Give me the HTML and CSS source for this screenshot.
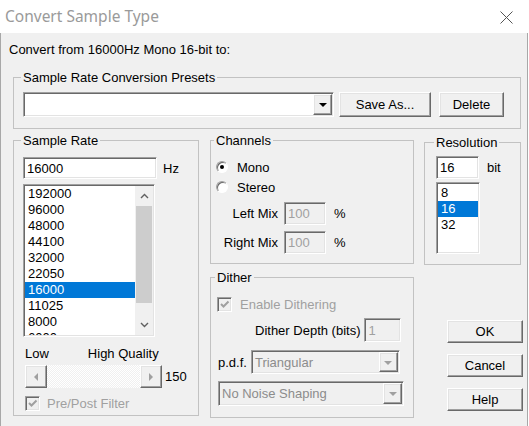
FILE: index.html
```html
<!DOCTYPE html>
<html>
<head>
<meta charset="utf-8">
<link rel="stylesheet" href="styles.css">
</head>
<body>
<div class="window">
  <div class="titlebar">
    <span class="title">Convert Sample Type</span>
    <svg class="close" width="13" height="13" viewBox="0 0 13 13"><path d="M0.5 0.5 L12.5 12.5 M12.5 0.5 L0.5 12.5" stroke="#555" stroke-width="1" fill="none"/></svg>
  </div>
  <div class="content">
    <p class="intro">Convert from 16000Hz Mono 16-bit to:</p>
    <fieldset class="group presets">
      <legend>Sample Rate Conversion Presets</legend>
      <div class="preset-row">
        <div class="combo sunken preset-combo">
          <span class="combo-text"></span>
          <span class="combo-btn raised"><span class="tri"></span></span>
        </div>
        <div class="btn raised save-btn">Save As...</div>
        <div class="btn raised delete-btn">Delete</div>
      </div>
    </fieldset>

    <div class="main">
      <fieldset class="group rate">
        <legend>Sample Rate</legend>
        <div class="field-row">
          <div class="edit sunken rate-edit">16000</div>
          <span class="unit">Hz</span>
        </div>
        <div class="listbox sunken rate-list">
          <div class="items">
            <div class="item">192000</div>
            <div class="item">96000</div>
            <div class="item">48000</div>
            <div class="item">44100</div>
            <div class="item">32000</div>
            <div class="item">22050</div>
            <div class="item selected">16000</div>
            <div class="item">11025</div>
            <div class="item">8000</div>
            <div class="item">6000</div>
          </div>
          <div class="vscroll">
            <div class="vs-btn"><svg width="9" height="6" viewBox="0 0 9 6"><path d="M1 5 L4.5 1.5 L8 5" stroke="#606060" stroke-width="1.4" fill="none"/></svg></div>
            <div class="vs-thumb"></div>
            <div class="vs-track"></div>
            <div class="vs-btn"><svg width="9" height="6" viewBox="0 0 9 6"><path d="M1 1 L4.5 4.5 L8 1" stroke="#606060" stroke-width="1.4" fill="none"/></svg></div>
          </div>
        </div>
        <div class="quality-labels">
          <span>Low</span>
          <span class="hq">High Quality</span>
        </div>
        <div class="slider-row">
          <div class="hslider">
            <div class="hs-btn raised"><span class="tri-left"></span></div>
            <div class="hs-track"></div>
            <div class="hs-btn raised"><span class="tri-right"></span></div>
          </div>
          <span class="slider-val">150</span>
        </div>
        <div class="check-row filter-row">
          <span class="checkbox sunken"><svg width="11" height="11" viewBox="0 0 11 11"><path d="M2 5 L4.5 7.5 L9.5 2.5" stroke="#a0a0a0" stroke-width="2" fill="none"/></svg></span>
          <span class="disabled-text">Pre/Post Filter</span>
        </div>
      </fieldset>

      <div class="col2">
        <fieldset class="group channels">
          <legend>Channels</legend>
          <div class="radio-row">
            <span class="radio"><span class="dot"></span></span>
            <span>Mono</span>
          </div>
          <div class="radio-row">
            <span class="radio"></span>
            <span>Stereo</span>
          </div>
          <div class="mix-grid">
            <span class="mix-label">Left Mix</span>
            <div class="edit sunken mix-edit disabled">100</div>
            <span class="pct">%</span>
            <span class="mix-label">Right Mix</span>
            <div class="edit sunken mix-edit disabled">100</div>
            <span class="pct">%</span>
          </div>
        </fieldset>

        <fieldset class="group dither">
          <legend>Dither</legend>
          <div class="check-row dither-check">
            <span class="checkbox sunken"><svg width="11" height="11" viewBox="0 0 11 11"><path d="M2 5 L4.5 7.5 L9.5 2.5" stroke="#a0a0a0" stroke-width="2" fill="none"/></svg></span>
            <span class="disabled-text">Enable Dithering</span>
          </div>
          <div class="depth-row">
            <span>Dither Depth (bits)</span>
            <div class="edit sunken depth-edit disabled">1</div>
          </div>
          <div class="pdf-row">
            <span>p.d.f.</span>
            <div class="combo sunken pdf-combo disabled">
              <span class="combo-text">Triangular</span>
              <span class="combo-btn raised"><span class="tri gray"></span></span>
            </div>
          </div>
          <div class="combo sunken noise-combo disabled">
            <span class="combo-text">No Noise Shaping</span>
            <span class="combo-btn raised"><span class="tri gray"></span></span>
          </div>
        </fieldset>
      </div>

      <div class="col3">
        <fieldset class="group resolution">
          <legend>Resolution</legend>
          <div class="field-row">
            <div class="edit sunken res-edit">16</div>
            <span class="unit bit">bit</span>
          </div>
          <div class="listbox sunken res-list">
            <div class="items">
              <div class="item">8</div>
              <div class="item selected">16</div>
              <div class="item">32</div>
            </div>
          </div>
        </fieldset>
        <div class="buttons">
          <div class="btn raised dlg-btn">OK</div>
          <div class="btn raised dlg-btn">Cancel</div>
          <div class="btn raised dlg-btn">Help</div>
        </div>
      </div>
    </div>
  </div>
</div>
</body>
</html>
```

FILE: styles.css
```css
* { box-sizing: border-box; }
html, body { margin: 0; padding: 0; }
body {
  width: 529px;
  height: 426px;
  overflow: hidden;
  background: #fff;
  font-family: "Liberation Sans", Arial, sans-serif;
  font-size: 13px;
  line-height: 15px;
  color: #000;
}
.window {
  width: 529px;
  height: 426px;
  display: flex;
  flex-direction: column;
}
.titlebar {
  height: 33px;
  flex: none;
  background: #fff;
  display: flex;
  align-items: center;
  justify-content: space-between;
  padding: 0 16px 0 5px;
}
.title {
  font-family: "Noto Sans", "Open Sans", sans-serif;
  font-size: 15.5px;
  color: #9a9a9a;
  margin-top: -1px;
}
.close { display: block; margin-top: 1px; }
.content {
  flex: 1;
  width: 528px;
  background: #f0f0f0;
  border-left: 1px solid #a8a8a8;
  border-right: 1px solid #a8a8a8;
  padding: 0 0 0 12px;
}
.intro {
  margin: 9px 0 13px -4px;
  height: 15px;
}

/* group boxes */
.group {
  margin: 0;
  min-width: 0;
  border: 1px solid #c2c2c2;
  padding: 0;
}
.group legend {
  padding: 0 2px;
  margin-left: -2px;
  line-height: 15px;
}

/* 3D borders */
.sunken {
  border: 1px solid;
  border-color: #a0a0a0 #fff #fff #a0a0a0;
  box-shadow: inset 1px 1px 0 #696969, inset -1px -1px 0 #e3e3e3;
  background: #fff;
  padding: 1px;
}
.raised {
  border: 1px solid;
  border-color: #fff #696969 #696969 #fff;
  box-shadow: inset -1px -1px 0 #a0a0a0, inset 1px 1px 0 #e3e3e3;
  background: #f0f0f0;
}
.disabled { background: #f0f0f0; color: #a0a0a0; }
.disabled-text { color: #a0a0a0; }

.btn {
  display: flex;
  align-items: center;
  justify-content: center;
}

/* presets */
.presets {
  width: 508px;
  height: 59px;
  padding: 7px 0 0 9px;
}
.preset-row {
  display: flex;
  align-items: center;
}
.combo {
  display: flex;
  align-items: stretch;
}
.combo-text {
  flex: 1;
  padding-left: 2px;
  display: flex;
  align-items: center;
}
.combo-btn {
  width: 19px;
  flex: none;
  display: flex;
  align-items: center;
  justify-content: center;
}
.tri {
  width: 0;
  height: 0;
  border-left: 4px solid transparent;
  border-right: 4px solid transparent;
  border-top: 4px solid #000;
  margin-top: 1px;
}
.tri.gray { border-top-color: #a0a0a0; }
.preset-combo { width: 311px; height: 25px; }
.save-btn { width: 92px; height: 25px; margin-left: 5px; }
.delete-btn { width: 65px; height: 25px; margin-left: 8px; }

/* main row */
.main {
  display: flex;
  align-items: flex-start;
  margin-top: 4px;
}

/* sample rate */
.rate {
  width: 186px;
  height: 283px;
  flex: none;
  padding: 9px 0 0 9px;
}
.field-row {
  display: flex;
  align-items: center;
}
.edit {
  display: flex;
  align-items: center;
  padding-left: 3px;
}
.rate-edit { width: 134px; height: 22px; }
.unit { margin-left: 6px; }
.listbox {
  display: flex;
  align-items: stretch;
}
.rate-list {
  width: 132px;
  height: 153px;
  margin-top: 5px;
}
.items {
  flex: 1;
  overflow: hidden;
  padding-top: 0;
}
.item {
  height: 16px;
  line-height: 16px;
  padding-left: 3px;
  white-space: nowrap;
}
.item.selected { background: #0078d7; color: #fff; }
.vscroll {
  width: 18px;
  flex: none;
  display: flex;
  flex-direction: column;
  background: #f0f0f0;
}
.vs-btn {
  height: 20px;
  flex: none;
  display: flex;
  align-items: center;
  justify-content: center;
}
.vs-btn svg { display: block; }
.vs-thumb {
  height: 97px;
  flex: none;
  background: #cdcdcd;
  margin: 0 1px;
}
.vs-track { flex: 1; }

.quality-labels {
  display: flex;
  margin-top: 9px;
  padding-left: 2px;
}
.hq { margin-left: 39px; }
.slider-row {
  display: flex;
  align-items: center;
  margin-top: 4px;
  padding-left: 2px;
}
.hslider {
  width: 137px;
  height: 23px;
  display: flex;
}
.hs-btn {
  width: 22px;
  flex: none;
  display: flex;
  align-items: center;
  justify-content: center;
}
.hs-track {
  flex: 1;
  background-color: #fff;
  background-image: repeating-conic-gradient(#f0f0f0 0 25%, #fff 0 50%);
  background-size: 2px 2px;
}
.tri-left, .tri-right {
  width: 0;
  height: 0;
  border-top: 4px solid transparent;
  border-bottom: 4px solid transparent;
}
.tri-left { border-right: 4px solid #a0a0a0; }
.tri-right { border-left: 4px solid #a0a0a0; }
.slider-val { margin-left: 3px; }

.check-row {
  display: flex;
  align-items: center;
}
.checkbox {
  width: 15px;
  height: 15px;
  padding: 0;
  background: #f0f0f0;
  display: flex;
  align-items: center;
  justify-content: center;
  flex: none;
}
.checkbox svg { display: block; }
.filter-row { margin-top: 8px; padding-left: 2px; }
.filter-row .checkbox { margin-right: 7px; }

/* column 2 */
.col2 {
  width: 204px;
  margin-left: 11px;
  flex: none;
  display: flex;
  flex-direction: column;
}
.channels {
  height: 131px;
  padding: 9px 0 0 5px;
}
.radio-row {
  display: flex;
  align-items: center;
  height: 20px;
}
.radio {
  width: 12px;
  height: 12px;
  border-radius: 50%;
  border: 1px solid;
  border-color: #a0a0a0 #fff #fff #a0a0a0;
  box-shadow: inset 1px 1px 0 #696969;
  background: #fff;
  margin-right: 9px;
  display: flex;
  align-items: center;
  justify-content: center;
  flex: none;
}
.dot {
  width: 4px;
  height: 4px;
  border-radius: 50%;
  background: #000;
}
.mix-grid {
  display: grid;
  grid-template-columns: 62px 42px auto;
  column-gap: 6px;
  row-gap: 6px;
  align-items: center;
  margin-top: 5px;
}
.mix-label { text-align: right; }
.mix-edit { height: 23px; }
.pct { margin-left: 2px; }

.dither {
  height: 148px;
  margin-top: 6px;
  padding: 12px 0 0 6px;
}
.dither-check .checkbox { margin-right: 8px; }
.depth-row {
  display: flex;
  align-items: center;
  margin-top: 6px;
  padding-left: 38px;
}
.depth-edit { width: 37px; height: 24px; margin-left: 4px; }
.pdf-row {
  display: flex;
  align-items: center;
  margin-top: 8px;
  padding-left: 1px;
}
.pdf-combo { width: 149px; height: 24px; margin-left: 4px; }
.noise-combo { width: 186px; height: 25px; margin-top: 7px; margin-left: 1px; }
.pdf-combo .combo-text, .noise-combo .combo-text { color: #8c8c8c; }

/* column 3 */
.col3 {
  width: 99px;
  margin-left: 10px;
  flex: none;
  display: flex;
  flex-direction: column;
}
.resolution {
  width: 97px;
  height: 130px;
  margin-top: 2px;
  padding: 6px 0 0 11px;
}
.res-edit { width: 43px; height: 23px; }
.bit { margin-left: 8px; }
.res-list {
  width: 44px;
  height: 72px;
  margin-top: 3px;
}
.res-list .items { padding-top: 1px; }
.buttons {
  display: flex;
  flex-direction: column;
  padding-left: 23px;
  margin-top: 55px;
  gap: 11px;
}
.dlg-btn { width: 76px; height: 23px; }
```
